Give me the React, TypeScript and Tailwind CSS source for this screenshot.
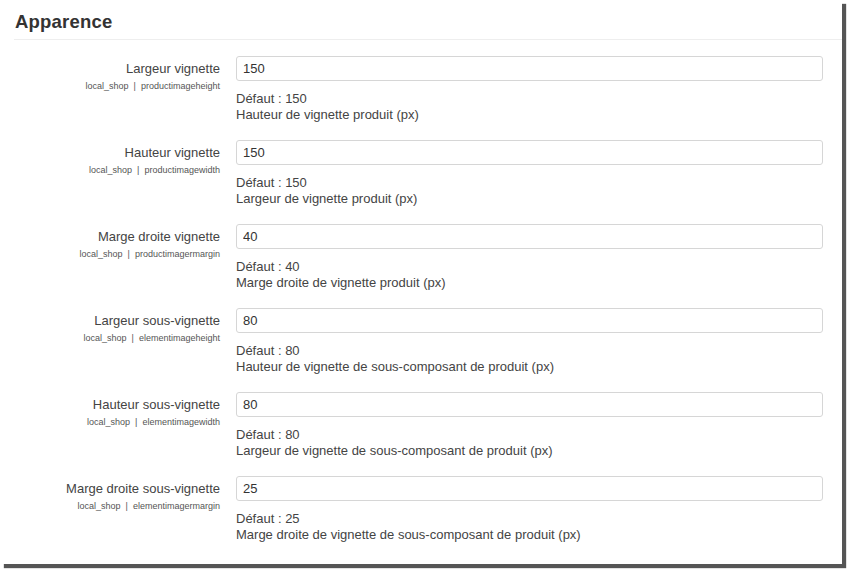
const rows = [
  { label: "Largeur vignette", key: "productimageheight", value: "150", help: "Hauteur de vignette produit (px)" },
  { label: "Hauteur vignette", key: "productimagewidth", value: "150", help: "Largeur de vignette produit (px)" },
  { label: "Marge droite vignette", key: "productimagermargin", value: "40", help: "Marge droite de vignette produit (px)" },
  { label: "Largeur sous-vignette", key: "elementimageheight", value: "80", help: "Hauteur de vignette de sous-composant de produit (px)" },
  { label: "Hauteur sous-vignette", key: "elementimagewidth", value: "80", help: "Largeur de vignette de sous-composant de produit (px)" },
  { label: "Marge droite sous-vignette", key: "elementimagermargin", value: "25", help: "Marge droite de vignette de sous-composant de produit (px)" },
];

function SettingRow({ label, keyName, value, help }: { label: string; keyName: string; value: string; help: string }) {
  return (
    <div className="grid grid-cols-[220px_1fr] gap-x-[16px] pb-[17px]">
      <div className="text-right">
        <div className="text-[13px] leading-[26px] text-[#444]">{label}</div>
        <div className="whitespace-pre text-[9px] leading-[9px] text-[#555]">local_shop  |  {keyName}</div>
      </div>
      <div className="pr-[19px]">
        <input
          defaultValue={value}
          className="block h-[25px] w-full rounded-[3px] border border-[#d6d6d6] px-[6px] text-[13px] text-[#333] outline-none"
        />
        <div className="mt-[10px] text-[13px] leading-[16px] text-[#444]">
          <div>Défaut : {value}</div>
          <div>{help}</div>
        </div>
      </div>
    </div>
  );
}

export default function App() {
  return (
    <div className="h-[574px] w-[850px] bg-white font-['Liberation_Sans',Arial,sans-serif]">
      <div className="h-[564px] w-[842px] bg-white shadow-[4px_4px_1px_#555]">
        <h2 className="px-[15px] pt-[10px] text-[18.5px] font-bold leading-[24px] tracking-[0.2px] text-[#333]">Apparence</h2>
        <div className="ml-[14px] mt-[5px] border-t border-[#eee]" />
        <div className="pt-[16px]">
          {rows.map((r) => (
            <SettingRow key={r.key} label={r.label} keyName={r.key} value={r.value} help={r.help} />
          ))}
        </div>
      </div>
    </div>
  );
}
